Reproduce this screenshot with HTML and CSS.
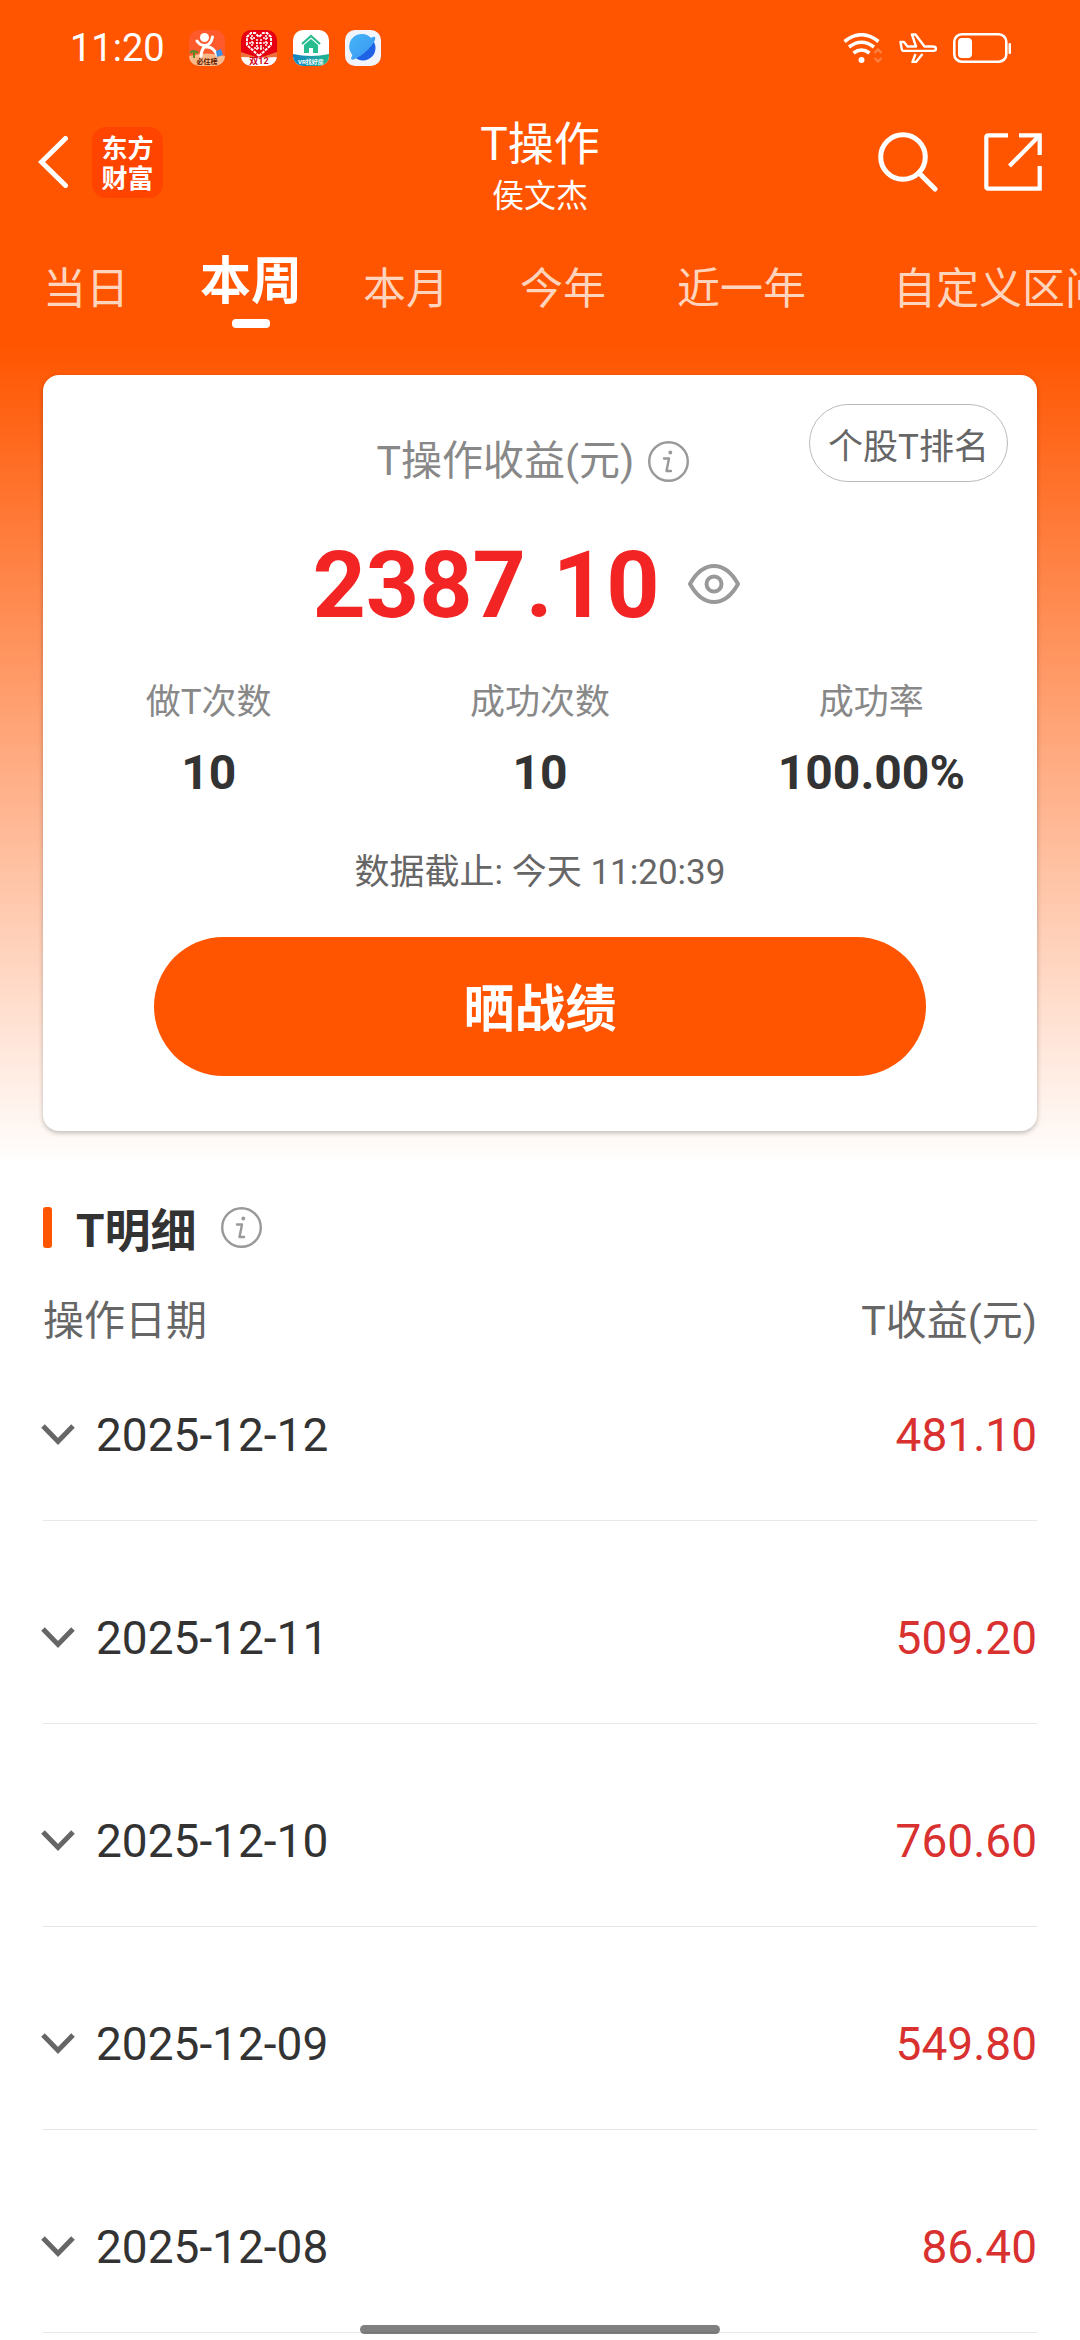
FILE: index.html
```html
<!DOCTYPE html>
<html lang="zh-CN">
<head>
<meta charset="utf-8">
<meta name="viewport" content="width=device-width, initial-scale=1">
<title>T操作</title>
<link rel="stylesheet" href="styles.css">
</head>
<body>
<svg class="defs" width="0" height="0" aria-hidden="true">
  <symbol id="info" viewBox="0 0 41 41">
    <circle cx="20.500" cy="20.500" r="19.300" fill="none" stroke="#999" stroke-width="2.400"/>
    <circle cx="22.300" cy="11.500" r="1.900" fill="#999"/>
    <path d="M16 17.500h5l-2.500 12.500h4.500" fill="none" stroke="#999" stroke-width="2.400" stroke-linejoin="round" stroke-linecap="round"/>
  </symbol>
  <symbol id="chevron" viewBox="0 0 34 22">
    <path d="M2 2l15 15.500L32 2" fill="none" stroke="#666" stroke-width="5"/>
  </symbol>
</svg>

<div class="hero">
  <div class="status">
    <time class="clock">11:20</time>
    <div class="apps">
      <svg width="36" height="36" viewBox="0 0 36 36">
        <defs><clipPath id="r1"><rect width="36" height="36" rx="10"/></clipPath></defs>
        <g clip-path="url(#r1)">
          <rect width="36" height="36" fill="#ff5a2b"/>
          <path d="M0 26q18-5 36 0v10H0z" fill="#fbb98a"/>
          <circle cx="15.500" cy="7.500" r="4.500" fill="#fff"/>
          <path d="M8 11q3 4.500 8 4.500Q22 15 23.500 7M12 26q0-5 4-10.500M17 17q7-1 11 8" fill="none" stroke="#fff" stroke-width="3" stroke-linecap="round"/>
          <path d="M1 23q3-4 8 0M5 22v6" stroke="#5c8a2a" stroke-width="2" fill="none"/>
          <path d="M27 21l5-2 2 6-6 2z" fill="#3d8fe0"/>
          <text x="18" y="34" text-anchor="middle" class="app-text app-text-small" fill="#5a1a00">必住榜</text>
        </g>
      </svg>
      <svg width="36" height="36" viewBox="0 0 36 36">
        <defs><clipPath id="r2"><rect width="36" height="36" rx="10"/></clipPath></defs>
        <g clip-path="url(#r2)">
          <rect width="36" height="36" fill="#e60012"/>
          <path d="M0 22l18 6 18-6v6H0z" fill="#f0703c"/>
          <path d="M0 27q18 1 36 0v9H0z" fill="#fff"/>
          <path d="M18 26L6 15V7l4-4h4l4 4 4-4h4l4 4v8z" fill="none" stroke="#fff" stroke-width="2" stroke-dasharray="3 1"/>
          <path d="M9 8h5M22 8h5M8 13h6M22 13h6M13 18h10M11 5v11M25 5v11M16 9v12M20 9v12M15 13h6" fill="none" stroke="#fff" stroke-width="1.500" stroke-dasharray="2 1"/>
          <text x="18" y="34" text-anchor="middle" class="app-text" fill="#d0001a">双12</text>
        </g>
      </svg>
      <svg width="36" height="36" viewBox="0 0 36 36">
        <defs>
          <clipPath id="r3"><rect width="36" height="36" rx="10"/></clipPath>
          <linearGradient id="g3"><stop offset="0" stop-color="#1683c4"/><stop offset="1" stop-color="#20b78f"/></linearGradient>
        </defs>
        <g clip-path="url(#r3)">
          <rect width="36" height="36" fill="#fff"/>
          <path d="M0 24q18 4 36 0v12H0z" fill="url(#g3)"/>
          <path d="M9 14l9-8 9 8" fill="none" stroke="#27bd8e" stroke-width="2.200"/>
          <path d="M11 15l7-6 7 6v8h-5v-5h-4v5h-5z" fill="#27bd8e"/>
          <text x="18" y="34" text-anchor="middle" class="app-text app-text-tiny" fill="#fff">VR找好房</text>
        </g>
      </svg>
      <svg width="36" height="36" viewBox="0 0 36 36">
        <defs><linearGradient id="g4" x2="1" y2="1"><stop offset="0" stop-color="#45b4f7"/><stop offset="1" stop-color="#3a96f2"/></linearGradient></defs>
        <rect width="36" height="36" rx="10" fill="#f1f4fa"/>
        <circle cx="18" cy="18" r="12.500" fill="#1f62e6"/>
        <path d="M30 7q1 3-3 8Q20 24 10 29q-4 2-4-1 1-2 1.500-3A12.500 12.500 0 0 1 26 8q3-2 4-1z" fill="url(#g4)"/>
      </svg>
    </div>
    <div class="signals">
      <svg width="40" height="30" viewBox="0 0 40 30">
        <g fill="none" stroke="#fff" stroke-width="3.600">
          <path d="M1.500 8.500q17-13.500 34 0"/><path d="M6 14q12.500-9.500 25 0"/><path d="M10.500 20q8-6 16 0"/>
        </g>
        <circle cx="18.500" cy="27" r="3" fill="#fff"/>
        <path d="M31.500 20l3.500-3.500 3.500 3.500M31.500 25l3.500 3.500 3.500-3.500" fill="none" stroke="#fff" stroke-opacity=".25" stroke-width="2.400"/>
      </svg>
      <svg width="38" height="30" viewBox="0 0 38 30">
        <g fill="none" stroke="#fff" stroke-width="2.400" stroke-linejoin="round">
          <path d="M1.500 9h3.500l3.500 4.500h8.500L13 1.500h3.500L25.500 13.500h8q3.500 0 3.500 2.200t-3.500 2.200H4.500q-1.500 0-1.800-2z"/>
          <path d="M16.500 21l-3 8h3.500l6.500-8"/>
        </g>
      </svg>
      <svg width="58" height="30" viewBox="0 0 58 30">
        <rect x="1.300" y="1.300" width="52" height="27.400" rx="7.500" fill="none" stroke="#fff" stroke-width="2.600"/>
        <rect x="5" y="5" width="14" height="20" rx="4" fill="#fff"/>
        <rect x="55.500" y="10" width="2.500" height="11" rx="1" fill="#fff"/>
      </svg>
    </div>
  </div>

  <header class="topbar">
    <div class="topbar-left">
      <button class="icon-btn" aria-label="返回">
        <svg width="30" height="52" viewBox="0 0 30 52"><path d="M27.500 2.500L3.500 26l24 23.500" fill="none" stroke="#fff" stroke-width="5" stroke-linecap="round" stroke-linejoin="miter"/></svg>
      </button>
      <a class="logo" href="#">东方<br>财富</a>
    </div>
    <div class="heading">
      <h1>T操作</h1>
      <p>侯文杰</p>
    </div>
    <div class="topbar-right">
      <button class="icon-btn" aria-label="搜索">
        <svg width="60" height="60" viewBox="0 0 60 60"><g fill="none" stroke="#fff" stroke-width="5"><circle cx="25" cy="25" r="22.300"/><path d="M41 41l16 16" stroke-linecap="round"/></g></svg>
      </button>
      <button class="icon-btn" aria-label="分享">
        <svg width="58" height="58" viewBox="0 0 58 58"><path d="M24 2.300H4.300q-2 0-2 2v49.400q0 2 2 2h51.400V33M35 2.300h20.700V22M55 3L25.500 33" fill="none" stroke="#fff" stroke-width="4.200"/></svg>
      </button>
    </div>
  </header>

  <nav class="tabs">
    <a class="tab" href="#">当日</a>
    <a class="tab tab-active" href="#" aria-current="page">本周</a>
    <a class="tab" href="#">本月</a>
    <a class="tab" href="#">今年</a>
    <a class="tab" href="#">近一年</a>
    <a class="tab tab-range" href="#">自定义区间</a>
  </nav>

  <section class="card">
    <div class="card-head">
      <div class="card-label">T操作收益(元)<svg width="41" height="41"><use href="#info"/></svg></div>
      <button class="rank-btn">个股T排名</button>
    </div>
    <div class="total">
      <strong>2387.10</strong>
      <button class="icon-btn" aria-label="隐藏金额">
        <svg width="52" height="40" viewBox="0 0 52 40"><g fill="none" stroke="#999" stroke-width="4"><path d="M2 20Q12 2 26 2t24 18Q40 38 26 38T2 20z" stroke-linejoin="round"/><circle cx="26" cy="20" r="7.500"/></g></svg>
      </button>
    </div>
    <dl class="stats">
      <div><dt>做T次数</dt><dd>10</dd></div>
      <div><dt>成功次数</dt><dd>10</dd></div>
      <div><dt>成功率</dt><dd>100.00%</dd></div>
    </dl>
    <p class="asof">数据截止: 今天 11:20:39</p>
    <button class="share-btn">晒战绩</button>
  </section>
</div>

<main class="detail">
  <h2 class="detail-title">T明细<svg width="41" height="41"><use href="#info"/></svg></h2>
  <table class="records">
    <thead>
      <tr><th scope="col">操作日期</th><th scope="col">T收益(元)</th></tr>
    </thead>
    <tbody>
      <tr><td><button class="date-btn"><svg width="34" height="22"><use href="#chevron"/></svg>2025-12-12</button></td><td>481.10</td></tr>
      <tr><td><button class="date-btn"><svg width="34" height="22"><use href="#chevron"/></svg>2025-12-11</button></td><td>509.20</td></tr>
      <tr><td><button class="date-btn"><svg width="34" height="22"><use href="#chevron"/></svg>2025-12-10</button></td><td>760.60</td></tr>
      <tr><td><button class="date-btn"><svg width="34" height="22"><use href="#chevron"/></svg>2025-12-09</button></td><td>549.80</td></tr>
      <tr><td><button class="date-btn"><svg width="34" height="22"><use href="#chevron"/></svg>2025-12-08</button></td><td>86.40</td></tr>
    </tbody>
  </table>
</main>
<div class="home-bar"></div>
</body>
</html>
```
FILE: styles.css
```css
* {
  box-sizing: border-box;
}

body,
h1,
h2,
p,
dl,
dd {
  margin: 0;
}

body {
  background: #fff;
  color: #333;
  font-family: Roboto, "Noto Sans CJK SC", sans-serif;
  overflow-x: hidden;
}

button {
  margin: 0;
  padding: 0;
  border: 0;
  background: none;
  color: inherit;
  font: inherit;
}

a {
  color: inherit;
  text-decoration: none;
}

svg {
  display: block;
  flex: none;
}

.defs {
  position: absolute;
}

.hero {
  padding-bottom: 34px;
  background: linear-gradient(#f50 0, #f50 345px, #fff 100%);
}

/* Phone status bar */
.status {
  display: flex;
  align-items: center;
  height: 96px;
  padding: 0 69px 0 70px;
  color: #fff;
}

.clock {
  width: 119px;
  font-size: 38px;
  line-height: 40px;
}

.apps {
  display: flex;
  gap: 16px;
}

.app-text {
  font-size: 9px;
  font-weight: 700;
}

.app-text-small {
  font-size: 7px;
}

.app-text-tiny {
  font-size: 6px;
}

.signals {
  display: flex;
  gap: 16px;
  margin-left: auto;
}

/* Title bar */
.topbar {
  display: grid;
  grid-template-columns: 1fr auto 1fr;
  align-items: center;
  height: 132px;
  padding: 0 38px;
  color: #fff;
}

.topbar-left,
.topbar-right {
  display: flex;
  align-items: center;
}

.topbar-left {
  gap: 24px;
}

.topbar-right {
  justify-content: flex-end;
  gap: 46px;
}

.logo {
  width: 71px;
  height: 71px;
  padding-top: 7px;
  border-radius: 14px;
  background: #ff4400;
  font-size: 26px;
  font-weight: 700;
  line-height: 30px;
  text-align: center;
}

.heading {
  padding-top: 4px;
  text-align: center;
}

.heading h1 {
  font-size: 46px;
  font-weight: 400;
  line-height: 64px;
}

.heading p {
  font-size: 32px;
  line-height: 40px;
}

/* Period tabs */
.tabs {
  display: flex;
  gap: 71px;
  height: 147px;
  padding: 24px 0 0 43px;
  overflow: hidden;
}

.tab {
  flex: none;
  padding-top: 7px;
  color: #ffd4bd;
  font-size: 43px;
  line-height: 60px;
}

.tab-active {
  margin-right: -10px;
  padding-top: 0;
  color: #fff;
  font-size: 51px;
  font-weight: 700;
}

.tab-active::after {
  display: block;
  width: 38px;
  height: 9px;
  margin: 7px auto 0;
  border-radius: 4px;
  background: #fff;
  content: "";
}

.tab-range {
  margin-left: 16px;
}

/* Summary card */
.card {
  margin: 0 43px;
  padding: 29px 0 55px;
  border-radius: 16px;
  background: #fff;
  box-shadow: 0 2px 5px rgba(0, 0, 0, 0.25);
}

.card-head {
  display: grid;
  grid-template-columns: 1fr auto 1fr;
  align-items: end;
  padding: 0 29px;
}

.card-label {
  display: flex;
  grid-column: 2;
  align-items: center;
  gap: 14px;
  padding-right: 14px;
  color: #888;
  font-size: 41px;
  line-height: 42px;
}

.rank-btn {
  justify-self: end;
  width: 199px;
  height: 78px;
  border: 1px solid #bbb;
  border-radius: 39px;
  color: #666;
  font-size: 35px;
}

.total {
  display: flex;
  justify-content: center;
  align-items: center;
  gap: 28px;
  margin-top: 42px;
  padding-right: 28px;
}

.total strong {
  padding-top: 4px;
  color: #f22424;
  font-size: 93px;
  font-weight: 700;
  line-height: 116px;
}

.stats {
  display: grid;
  grid-template-columns: repeat(3, 1fr);
  margin-top: 34px;
  text-align: center;
}

.stats dt {
  color: #888;
  font-size: 35px;
  line-height: 50px;
}

.stats dd {
  margin-top: 17px;
  font-size: 48px;
  font-weight: 700;
  line-height: 56px;
}

.asof {
  margin-top: 47px;
  color: #666;
  font-size: 35px;
  line-height: 50px;
  text-align: center;
}

.share-btn {
  display: block;
  width: calc(100% - 222px);
  height: 139px;
  margin: 39px auto 0;
  padding-bottom: 4px;
  border-radius: 70px;
  background: #f50;
  color: #fff;
  font-size: 51px;
  font-weight: 700;
}

/* Daily records */
.detail {
  padding: 34px 43px 0;
}

.detail-title {
  display: flex;
  align-items: center;
  height: 56px;
  font-size: 46px;
  font-weight: 700;
}

.detail-title::before {
  width: 9px;
  height: 41px;
  margin-right: 24px;
  border-radius: 3px;
  background: #f50;
  content: "";
}

.detail-title svg {
  margin-left: 24px;
}

.records {
  width: 100%;
  margin-top: 38px;
  border-collapse: collapse;
}

.records th,
.records td {
  padding: 0;
  line-height: 56px;
  text-align: left;
}

.records th {
  color: #666;
  font-size: 41px;
  font-weight: 400;
}

.records td {
  padding: 89px 0 57px;
  border-bottom: 1px solid #e8e8e8;
  font-size: 46px;
}

.records tbody tr:first-child td {
  padding-top: 58px;
}

.records th:last-child,
.records td:last-child {
  text-align: right;
}

.records td:last-child {
  color: #d93030;
}

.date-btn {
  display: flex;
  align-items: center;
  gap: 21px;
  margin-left: -2px;
}

.home-bar {
  position: fixed;
  bottom: 6px;
  left: 50%;
  width: 360px;
  height: 9px;
  margin-left: -180px;
  border-radius: 5px;
  background: rgba(0, 0, 0, 0.5);
}
```
